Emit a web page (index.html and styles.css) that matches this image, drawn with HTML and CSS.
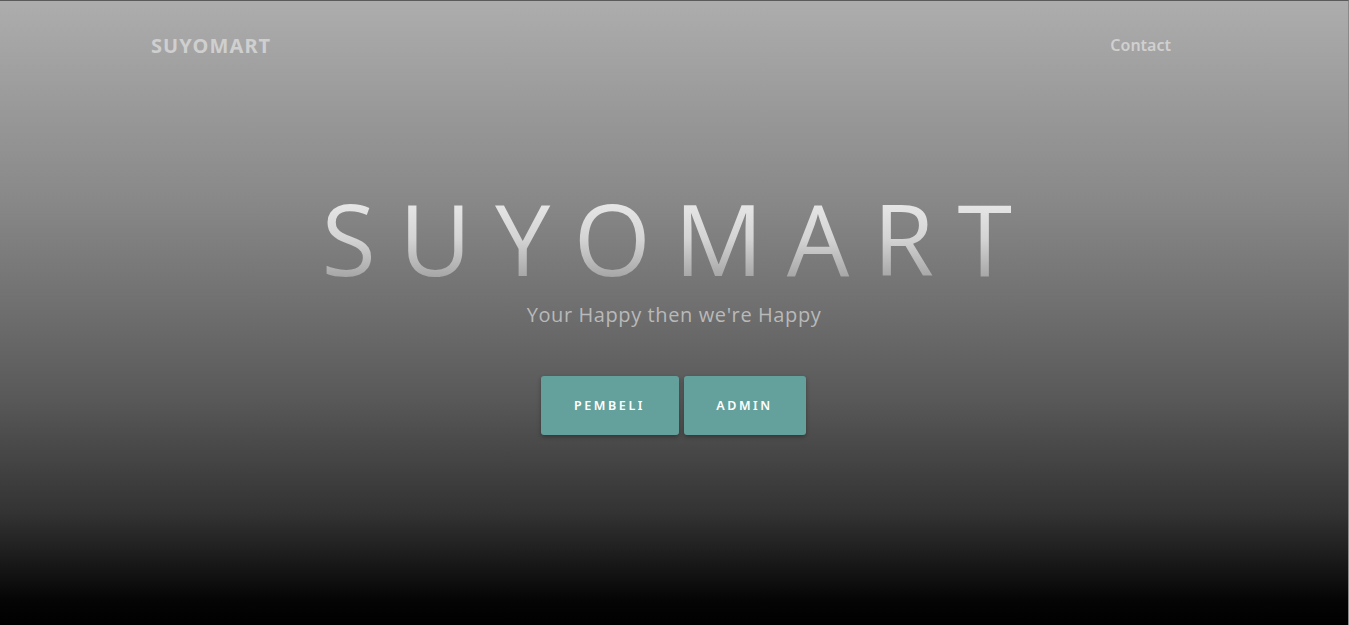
FILE: index.html
```html
<!DOCTYPE html>
<html lang="en">
<head>
<meta charset="utf-8">
<title>SUYOMART</title>
<link rel="stylesheet" href="styles.css">
</head>
<body>
<div class="page">
  <nav class="nav">
    <a class="brand" href="#">SUYOMART</a>
    <a class="nav-link" href="#">Contact</a>
  </nav>
  <header class="hero">
    <h1 class="hero-title">SUYOMART</h1>
    <p class="hero-sub">Your Happy then we're Happy</p>
    <div class="hero-actions">
      <a class="btn btn-wide" href="#">PEMBELI</a>
      <a class="btn" href="#">ADMIN</a>
    </div>
  </header>
</div>
</body>
</html>
```
FILE: styles.css
```css
html, body {
  margin: 0;
  padding: 0;
  height: 100%;
}
body {
  font-family: "Open Sans", "Noto Sans", sans-serif;
  background: #000;
}
.page {
  box-sizing: border-box;
  height: 625px;
  border-top: 1px solid #5a5a5a;
  border-right: 1px solid #8a8a8a;
  background: linear-gradient(to bottom, #adadad 0%, #888888 32%, #6e6e6e 50%, #585858 64%, #333333 82%, #050505 96%, #000000 100%);
  display: flex;
  flex-direction: column;
}
.nav {
  display: flex;
  justify-content: space-between;
  align-items: center;
  padding: 30px 177px 0 151px;
  height: 28px;
}
.brand {
  color: #cfcfcf;
  font-family: "Noto Sans", sans-serif;
  font-weight: 700;
  font-size: 20px;
  text-decoration: none;
  letter-spacing: 1.1px;
}
.nav-link {
  color: #d0d0d0;
  font-family: "Noto Sans", sans-serif;
  font-weight: 600;
  font-size: 16px;
  text-decoration: none;
}
.hero {
  display: flex;
  flex-direction: column;
  align-items: center;
  margin-top: 120px;
}
.hero-title {
  margin: 0 -9px 0 0;
  font-family: "Open Sans", sans-serif;
  font-weight: 400;
  font-size: 99px;
  line-height: 1.2;
  letter-spacing: 23.5px;
  background: linear-gradient(to bottom, #eeeeee 8%, #d4d4d4 50%, #999999 92%);
  -webkit-background-clip: text;
  background-clip: text;
  color: transparent;
}
.hero-sub {
  margin: 3px 0 0;
  color: #b9b9b9;
  font-size: 20px;
  letter-spacing: 0.6px;
}
.hero-actions {
  display: flex;
  gap: 5px;
  margin-top: 48px;
  margin-left: -2px;
}
.btn {
  display: flex;
  align-items: center;
  justify-content: center;
  width: 122px;
  height: 59px;
  box-sizing: border-box;
  background: #64a19c;
  color: #ffffff;
  font-family: "Noto Sans", sans-serif;
  font-weight: 600;
  font-size: 12.5px;
  letter-spacing: 2.6px;
  text-decoration: none;
  border-radius: 3px;
  box-shadow: 0 2px 4px rgba(0, 0, 0, 0.3);
}
.btn-wide {
  width: 138px;
}
```
